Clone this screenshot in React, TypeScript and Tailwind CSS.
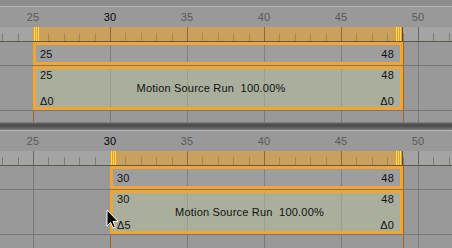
import React from "react";

const fx = (f: number) => 33 + (f - 25) * 15.4;
const END = 403;

type PanelProps = {
  start: number;
  first: boolean;
  clipClass: string;
  delta: string;
  children?: React.ReactNode;
};

function Ruler({ start }: { start: number }) {
  const sx = Math.round(fx(start));
  const ticks = [];
  for (let f = 22; f <= 53; f++) {
    const x = Math.round(fx(f)) + 0.5;
    const major = f % 5 === 0;
    const inBand = x > sx && x < END;
    const color = inBand ? (major ? "#8c6a38" : "#a9874f") : major ? "#676767" : "#7c7c7c";
    ticks.push(<line key={f} x1={x} x2={x} y1={major ? 0 : 6} y2={14} stroke={color} />);
  }
  return (
    <svg width="452" height="14" className="block">
      <rect width="452" height="14" fill="#a4a4a4" />
      <rect x={sx} width={END - sx} height="14" fill="#c9a05e" />
      {ticks}
      <rect x={sx} width="7" height="14" fill="#e99c22" />
      {[1, 3, 5].map((d) => (
        <rect key={d} x={sx + d} width="1" height="14" fill="#ffdc66" />
      ))}
      <rect x={395} width="7" height="14" fill="#e99c22" />
      {[396, 398, 400].map((x) => (
        <rect key={x} x={x} width="1" height="14" fill="#ffdc66" />
      ))}
      <rect x={402} width="1" height="14" fill="#6e4a1c" />
    </svg>
  );
}

function Grid({ start }: { start: number }) {
  const sx = Math.round(fx(start));
  return (
    <svg className="absolute inset-0 h-full w-full" width="452">
      {[25, 30, 35, 40, 45, 50].map((f) => {
        const x = Math.round(fx(f)) + 0.5;
        return <line key={f} x1={x} x2={x} y1="0" y2="100%" stroke={Math.round(fx(f)) === sx ? "#a2661e" : "#7a7a7a"} />;
      })}
      <line x1={403.5} x2={403.5} y1="0" y2="100%" stroke="#a2661e" />
    </svg>
  );
}

function Panel({ start, first, clipClass, delta, children }: PanelProps) {
  return (
    <div className="flex flex-col">
      {first && <div className="h-[6px] bg-[#8c8c8c]" />}
      <div className="h-px bg-[#b6b6b6]" />
      <div className="flex h-[20px] items-center">
        <div className="-ml-[5.5px] flex">
          {[25, 30, 35, 40, 45, 50].map((n) => (
            <span key={n} className={`w-[77px] text-center leading-none ${n === 30 ? "text-[#050505]" : "text-[#5a5a5a]"}`}>
              {n}
            </span>
          ))}
        </div>
      </div>
      <Ruler start={start} />
      <div className="h-px bg-[#5e574c]" />
      <div className="relative flex flex-col">
        <Grid start={start} />
        <div className="relative flex h-[23px]">
          <div className={`${clipClass} flex items-center justify-between border-[3px] border-[#f2a531] bg-white/5 pl-[4px] pr-[6px] leading-[12px]`}>
            <span>{start}</span>
            <span>48</span>
          </div>
        </div>
        <div className="relative h-px bg-[#767676]" />
        <div className="relative flex h-[44px]">
          <div className={`${clipClass} flex flex-col justify-between border-[3px] border-[#f2a531] bg-[#b9c5a0]/50 pl-[4px] pr-[6px] leading-[12px]`}>
            <div className="flex justify-between">
              <span>{start}</span>
              <span>48</span>
            </div>
            <div className="whitespace-pre pr-[12px] text-center">Motion Source Run  100.00%</div>
            <div className="flex justify-between">
              <span>Δ{delta}</span>
              <span>Δ0</span>
            </div>
          </div>
        </div>
        <div className="relative h-px bg-[#767676]" />
        <div className={first ? "h-[11px]" : "h-[13px]"} />
      </div>
      {children}
    </div>
  );
}

export default function App() {
  return (
    <div className="relative h-[248px] w-[452px] overflow-hidden bg-[#999999] font-['Liberation_Sans',sans-serif] text-[11px] tracking-[0.2px] text-[#111]">
      <Panel start={25} first clipClass="ml-[33px] w-[370px]" delta="0">
        <div className="h-[8px] bg-[linear-gradient(#858585,#474747_35%,#555555_60%,#7c7c7c)]" />
      </Panel>
      <Panel start={30} first={false} clipClass="ml-[110px] w-[293px]" delta="5" />
      <svg className="absolute left-[106px] top-[209px]" width="14" height="21" viewBox="0 0 14 21">
        <path d="M1 1 L1 17 L4.6 13.4 L7.2 19 L9.4 18 L7 12.4 L12 12.4 Z" fill="#000" stroke="#fff" strokeWidth="1" />
      </svg>
    </div>
  );
}
